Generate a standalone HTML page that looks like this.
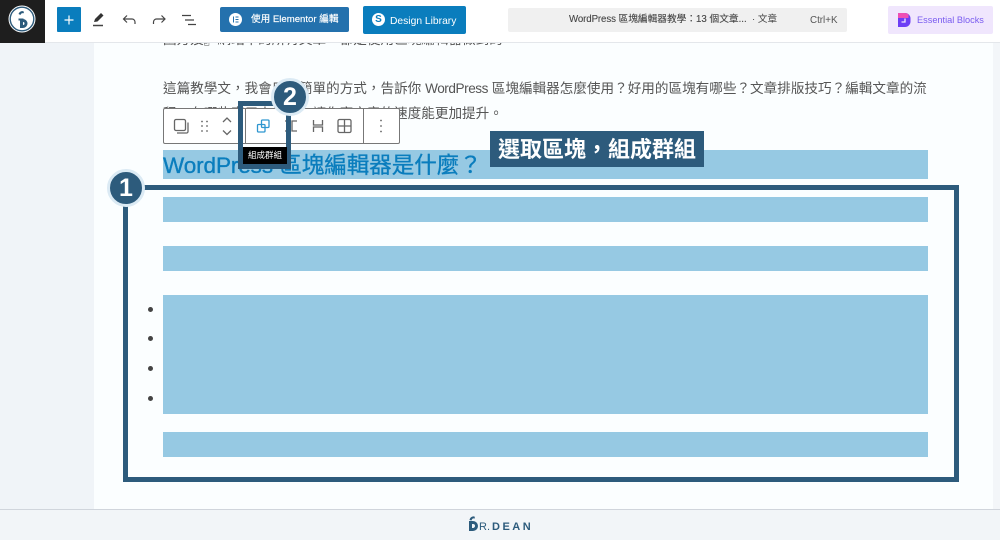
<!DOCTYPE html>
<html lang="zh-Hant"><head><meta charset="utf-8"><title>區塊編輯器</title>
<style>
*{box-sizing:border-box}
html,body{margin:0;padding:0}
body{width:1000px;height:540px;position:relative;overflow:hidden;background:#f0f4f8;font-family:"Liberation Sans","Noto Sans CJK TC",sans-serif;color:#555}
.a{position:absolute}
.t{position:absolute;white-space:nowrap}
.sel{position:absolute;background:#96c9e3;left:163px;width:765px}
.dot{position:absolute;left:148px;width:5px;height:5px;border-radius:50%;background:#444}
svg{position:absolute;overflow:visible}
.badge{position:absolute;width:38px;height:38px;border-radius:50%;background:#2d5b7c;border:3px solid #dbeaf4;color:#fff;font-weight:700;font-size:25px;line-height:32px;text-align:center}
</style></head><body>
<div class="a" style="left:94px;top:0;width:906px;height:509px;background:#fbfeff"></div>
<div class="a" style="left:993px;top:42px;width:7px;height:467px;background:#f3f6f9"></div>

<div class="t" style="left:163px;top:30px;font-size:13.6px;line-height:20px">國方笈』網站中的所有文章，都是使用區塊編輯器做到的</div>
<div class="t" style="left:163px;top:79px;font-size:13.6px;line-height:20px">這篇教學文，我會用最簡單的方式，告訴你 <span style="letter-spacing:-.45px">WordPress</span> 區塊編輯器怎麼使用？好用的區塊有哪些？文章排版技巧？編輯文章的流</div>
<div class="t" style="left:163px;top:104px;font-size:13.6px;line-height:20px">程，有哪些實用小技巧，讓你寫文章的速度能更加提升。</div>

<div class="sel" style="top:150px;height:29px"></div>
<div class="t" style="left:163px;top:151px;font-size:22.5px;line-height:30px;color:#0a7dbd;-webkit-text-stroke:.35px #0a7dbd"><span style="letter-spacing:-.1px">WordPress</span> 區塊編輯器是什麼？</div>
<div class="sel" style="top:197px;height:25px"></div>
<div class="sel" style="top:246px;height:25px"></div>
<div class="sel" style="top:295px;height:119px"></div>
<div class="sel" style="top:432px;height:25px"></div>
<div class="dot" style="top:307px"></div>
<div class="dot" style="top:336px"></div>
<div class="dot" style="top:366px"></div>
<div class="dot" style="top:396px"></div>

<!-- block toolbar -->
<div class="a" style="left:163px;top:108px;width:237px;height:36px;background:#fff;border:1px solid #777;border-radius:2px"></div>
<div class="a" style="left:245px;top:109px;width:1px;height:34px;background:#777"></div>
<div class="a" style="left:363px;top:109px;width:1px;height:34px;background:#777"></div>
<svg style="left:163px;top:108px" width="237" height="36" fill="none" stroke="#666" stroke-width="1.3">
<rect x="11.500" y="11.500" width="11" height="11" rx="1.500"/><path d="M25 14.500v9a1.500 1.500 0 0 1-1.500 1.500H14"/>
<g fill="#666" stroke="none"><circle cx="39" cy="13.500" r=".9"/><circle cx="44" cy="13.500" r=".9"/><circle cx="39" cy="18" r=".9"/><circle cx="44" cy="18" r=".9"/><circle cx="39" cy="23" r=".9"/><circle cx="44" cy="23" r=".9"/></g>
<path d="M60 14l4-4 4 4M60 22.500l4 4 4-4"/>
<g stroke="#2e96d0"><rect x="94.500" y="16.500" width="7.500" height="7.500" rx="1"/><rect x="98.500" y="12" width="7.500" height="7.500" rx="1"/></g>
<path d="M122 13h5v10h-5M134 13h-5v10h5" stroke="#666"/>
<path d="M150.500 12v5h9v-5M150.500 24v-5h9v5" stroke="#666"/>
<rect x="175" y="11.500" width="13" height="13" rx="1.500"/><path d="M181.500 11.500v13M175 18h13"/>
<g fill="#666" stroke="none"><circle cx="218" cy="12.500" r=".9"/><circle cx="218" cy="18" r=".9"/><circle cx="218" cy="23.500" r=".9"/></g>
</svg>

<!-- top bar -->
<div class="a" style="left:0;top:0;width:1000px;height:43px;background:#fff;border-bottom:1px solid #e4e7eb"></div>
<div class="a" style="left:0;top:0;width:45px;height:43px;background:#1e1e1e"></div>
<svg style="left:8px;top:5px" width="28" height="28" viewBox="0 0 28 28">
<circle cx="14" cy="14" r="13.500" fill="#fff"/><circle cx="14" cy="14" r="11.800" fill="none" stroke="#2d5b7c" stroke-width="1.400"/>
<path d="M13.500 15.500h1.500a3 3 0 0 1 0 6h-1.500z" fill="none" stroke="#2d5b7c" stroke-width="3"/><rect x="10.500" y="13.500" width="5" height="2" fill="#2d5b7c"/>
<path d="M10.500 9c.8-2.200 2.800-3.200 5-2.700l.5 2c-1.500-.4-3 0-3.500 1.700z" fill="#2d5b7c"/>
</svg>
<div class="a" style="left:57px;top:7px;width:24px;height:25px;background:#0a7dbd;border-radius:1px"></div>
<svg style="left:57px;top:8px" width="24" height="24" fill="none" stroke="#fff" stroke-width="1.200"><path d="M12 7.500v9M7.500 12h9"/></svg>
<svg style="left:90px;top:10px" width="110" height="20" fill="none" stroke="#444" stroke-width="1.200">
<path d="M4 12l1-3 6-6 2.500 2.500-6 6z" fill="#333" stroke="none"/><path d="M3 15.500h10" stroke-width="1.500"/>
<path d="M37 5.500l-3.500 3.500 3.500 3.500M33.500 9H42a3 3 0 0 1 3 3v2"/>
<path d="M71.500 5.500l3.500 3.500-3.500 3.500M75 9h-8.500a3 3 0 0 0-3 3v2"/>
<path d="M92 5.500h9M95 10h9M98 14.500h8" stroke-width="1.300"/>
</svg>
<div class="a" style="left:220px;top:7px;width:129px;height:25px;background:#2471ad;border-radius:2px"></div>
<div class="a" style="left:229px;top:13px;width:13px;height:13px;border-radius:50%;background:#fff"></div>
<svg style="left:229px;top:13px" width="13" height="13" fill="none" stroke="#2471ad" stroke-width="1"><path d="M4.500 3.500v6M6.500 4h3M6.500 6.500h3M6.500 9h3"/></svg>
<div class="t" style="left:251px;top:12px;font-size:9.600px;line-height:15px;color:#fff;-webkit-text-stroke:.15px #fff">使用 Elementor 編輯</div>
<div class="a" style="left:363px;top:6px;width:103px;height:28px;background:#0a7dbd;border-radius:2px"></div>
<div class="a" style="left:372px;top:13px;width:13px;height:13px;border-radius:50%;background:#fff;color:#0a7dbd;font-size:10px;line-height:13px;text-align:center;font-weight:700">S</div>
<div class="t" style="left:390px;top:14px;font-size:10.300px;line-height:15px;color:#fff">Design Library</div>
<div class="a" style="left:508px;top:8px;width:339px;height:24px;background:#f0f0f0;border-radius:2px"></div>
<div class="t" style="left:569px;top:12px;font-size:9.700px;line-height:15px;color:#444;-webkit-text-stroke:.1px #444"><span style="letter-spacing:-.1px">WordPress</span> 區塊編輯器教學：13 個文章...</div>
<div class="t" style="left:752px;top:12px;font-size:9.600px;line-height:15px;color:#444">· 文章</div>
<div class="t" style="left:810px;top:13px;font-size:9.800px;line-height:15px;color:#555">Ctrl+K</div>
<div class="a" style="left:888px;top:6px;width:105px;height:28px;background:#f0e6fd;border-radius:2px"></div>
<svg style="left:898px;top:13px" width="13" height="14"><path d="M0 0h7a5.500 5.500 0 0 1 5.500 5.500v3A5.500 5.500 0 0 1 7 14H0z" fill="#6d3df5"/><path d="M0 0h7a5.500 5.500 0 0 1 3.500 1.300V5H0z" fill="#ee4fb4"/><path d="M7 5.500v3.500H3.500" stroke="#f0e6fd" stroke-width="1.300" fill="none"/></svg>
<div class="t" style="left:917px;top:13px;font-size:9.200px;line-height:15px;color:#7a5cf0">Essential Blocks</div>

<!-- annotations -->
<div class="a" style="left:238px;top:101px;width:53px;height:68px;border:5px solid #2d5b7c"></div>
<div class="a" style="left:243px;top:147px;width:44px;height:17px;background:#000;color:#fff;font-size:8.500px;line-height:17px;text-align:center;white-space:nowrap">組成群組</div>
<div class="a" style="left:123px;top:185px;width:836px;height:297px;border:5px solid #2d5b7c"></div>
<div class="badge" style="left:107px;top:169px">1</div>
<div class="badge" style="left:271px;top:78px">2</div>
<div class="a" style="left:490px;top:131px;width:214px;height:36px;background:#2d5b7c"></div>
<div class="t" style="left:498px;top:132px;color:#fff;font-weight:700;font-size:22px;line-height:36px">選取區塊，組成群組</div>

<!-- footer -->
<div class="a" style="left:0;top:509px;width:1000px;height:31px;background:#f2f5f8;border-top:1px solid #d0d5dc"></div>
<svg style="left:467px;top:515px" width="14" height="17" viewBox="0 0 14 17"><path d="M3.500 7.500h2.500a3.500 3.500 0 0 1 0 7H3.500z" fill="none" stroke="#2d5b7c" stroke-width="3"/><path d="M2.500 5C3 2.500 5 1 7.500 1.500L8 3.500C6 3 5 3.500 4.500 5.500z" fill="#2d5b7c"/></svg>
<div class="t" style="left:479px;top:519px;font-size:11px;line-height:16px;color:#2d5b7c">R.</div>
<div class="t" style="left:492px;top:519px;font-size:11px;line-height:16px;color:#2d5b7c;font-weight:700;letter-spacing:2.500px">DEAN</div>
</body></html>
